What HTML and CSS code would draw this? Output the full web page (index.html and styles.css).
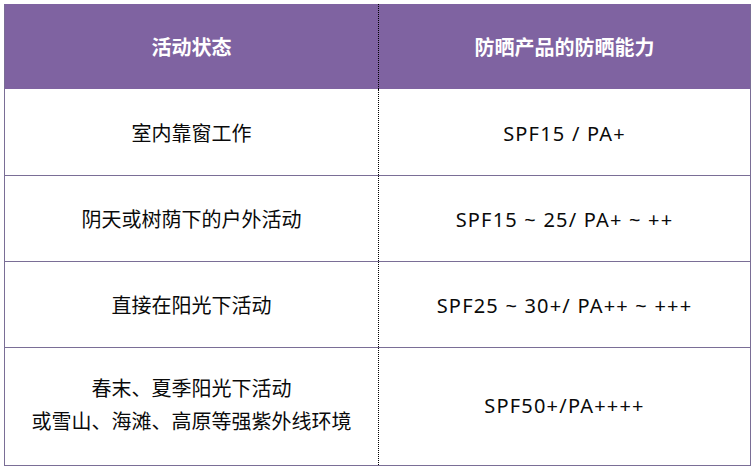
FILE: index.html
```html
<!DOCTYPE html>
<html lang="zh">
<head>
<meta charset="utf-8">
<link rel="stylesheet" href="styles.css">
</head>
<body>
<div class="sheet">
  <div class="row head">
    <div class="cell">活动状态</div>
    <div class="cell right">防晒产品的防晒能力</div>
  </div>
  <div class="row">
    <div class="cell">室内靠窗工作</div>
    <div class="cell right latin">SPF15 / PA+</div>
  </div>
  <div class="row">
    <div class="cell">阴天或树荫下的户外活动</div>
    <div class="cell right latin">SPF15 ~ 25/ PA+ ~ ++</div>
  </div>
  <div class="row">
    <div class="cell">直接在阳光下活动</div>
    <div class="cell right latin">SPF25 ~ 30+/ PA++ ~ +++</div>
  </div>
  <div class="row tall">
    <div class="cell">春末、夏季阳光下活动<br>或雪山、海滩、高原等强紫外线环境</div>
    <div class="cell right latin">SPF50+/PA++++</div>
  </div>
</div>
</body>
</html>
```
FILE: styles.css
```css
html, body {
  margin: 0;
  padding: 0;
  background: #ffffff;
}
body {
  font-family: "Noto Sans", "Noto Sans CJK SC", sans-serif;
  font-size: 20px;
  color: #0a0a0a;
}
.sheet {
  margin: 4px 0 0 4px;
  width: 747px;
  border-left: 1px solid #7a6e96;
  border-right: 1px solid #7a6e96;
  border-bottom: 1px solid #7a6e96;
  box-sizing: border-box;
}
.row {
  display: grid;
  grid-template-columns: 373px 1fr;
  height: 86px;
  border-top: 1px solid #7a6e96;
  box-sizing: border-box;
}
.row.head {
  height: 85px;
  border-top: none;
  background: #7f63a1;
  color: #ffffff;
  font-weight: bold;
}
.row.head + .row {
  border-top: none;
}
.row.tall {
  height: 118px;
}
.cell {
  display: flex;
  align-items: center;
  justify-content: center;
  text-align: center;
  line-height: 33px;
  padding-top: 2px;
}
.row.tall .cell {
  padding-top: 0;
  padding-bottom: 3px;
}
.cell.right {
  border-left: 1px dotted #000000;
}
.cell.latin {
  letter-spacing: 1.2px;
}
```
